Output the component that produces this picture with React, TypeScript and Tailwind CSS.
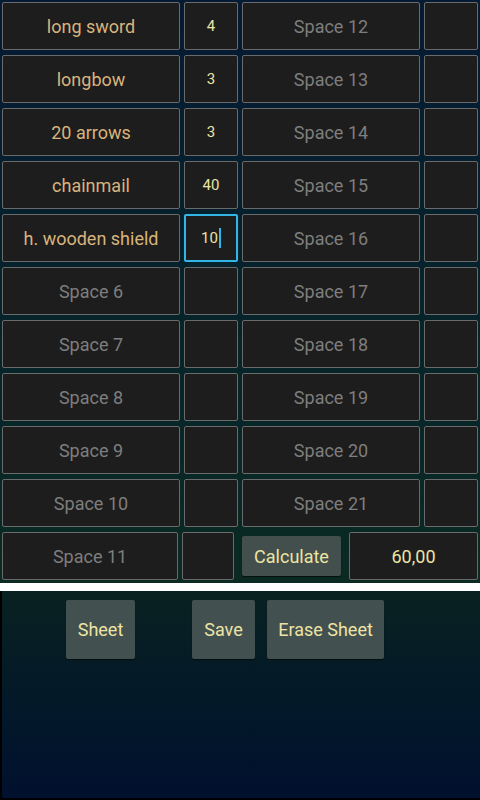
import React from "react";

const items: { name?: string; qty?: string; focused?: boolean }[] = [
  { name: "long sword", qty: "4" },
  { name: "longbow", qty: "3" },
  { name: "20 arrows", qty: "3" },
  { name: "chainmail", qty: "40" },
  { name: "h. wooden shield", qty: "10", focused: true },
];

const font = { fontFamily: "Roboto, 'Noto Sans', sans-serif" };

function Cell({ children, className = "" }: { children?: React.ReactNode; className?: string }) {
  return (
    <div
      className={`h-[48px] flex items-center justify-center bg-[#1d1d1d] border border-[#6a6a6a] rounded-[2px] ${className}`}
    >
      {children}
    </div>
  );
}

export default function App() {
  const rows = Array.from({ length: 10 }, (_, i) => i);

  return (
    <div className="w-[480px] h-[800px] flex flex-col bg-white" style={font}>
      {/* sheet grid */}
      <div className="h-[583px] pt-[2px] px-[2px] bg-gradient-to-b from-[#051a33] to-[#0a2a22]">
        <div className="grid grid-cols-[178px_54px_178px_54px] gap-x-[4px] gap-y-[5px]">
          {rows.map((i) => {
            const it = items[i];
            return (
              <React.Fragment key={i}>
                <Cell>
                  {it?.name ? (
                    <span className="text-[18px] text-[#d8b47c]">{it.name}</span>
                  ) : (
                    <span className="text-[18px] text-[#7e7e7e]">Space {i + 1}</span>
                  )}
                </Cell>
                {it?.focused ? (
                  <div className="h-[48px] flex items-center justify-center bg-[#1d1d1d] border-2 border-[#33b5e5] rounded-[2px]">
                    <span className="text-[15px] text-[#ece4a4] flex items-center">
                      10
                      <span className="inline-block w-[2px] h-[20px] bg-[#33b5e5] ml-[1px]" />
                    </span>
                  </div>
                ) : (
                  <Cell>
                    {it?.qty && <span className="text-[15px] text-[#ece4a4]">{it.qty}</span>}
                  </Cell>
                )}
                <Cell>
                  <span className="text-[18px] text-[#7e7e7e]">Space {i + 12}</span>
                </Cell>
                <Cell />
              </React.Fragment>
            );
          })}
          <div className="col-span-4 flex items-center">
            <Cell className="w-[176px]">
              <span className="text-[18px] text-[#7e7e7e]">Space 11</span>
            </Cell>
            <Cell className="w-[52px] ml-[4px]" />
            <button className="ml-[8px] w-[99px] h-[40px] bg-[#434f4c] rounded-[2px] text-[18px] text-[#ece4a4] shadow-[0_1px_1px_rgba(0,0,0,0.6)]">
              Calculate
            </button>
            <Cell className="ml-[8px] w-[129px]">
              <span className="text-[18px] text-[#ece4a4]">60,00</span>
            </Cell>
          </div>
        </div>
      </div>

      {/* white strip */}
      <div className="h-[8px] bg-white" />

      {/* bottom bar */}
      <div className="flex-1 border-l-2 border-b-2 border-black bg-gradient-to-b from-[#0a2121] to-[#01102e] pt-[9px]">
        <div className="flex items-start ml-[64px]">
          <button className="w-[69px] h-[59px] bg-[#435050] rounded-[2px] text-[18px] text-[#ece4a4] shadow-[0_1px_1px_rgba(0,0,0,0.6)]">
            Sheet
          </button>
          <button className="ml-[57px] w-[63px] h-[59px] bg-[#435050] rounded-[2px] text-[18px] text-[#ece4a4] shadow-[0_1px_1px_rgba(0,0,0,0.6)]">
            Save
          </button>
          <button className="ml-[12px] w-[117px] h-[59px] bg-[#435050] rounded-[2px] text-[18px] text-[#ece4a4] shadow-[0_1px_1px_rgba(0,0,0,0.6)]">
            Erase Sheet
          </button>
        </div>
      </div>
    </div>
  );
}
